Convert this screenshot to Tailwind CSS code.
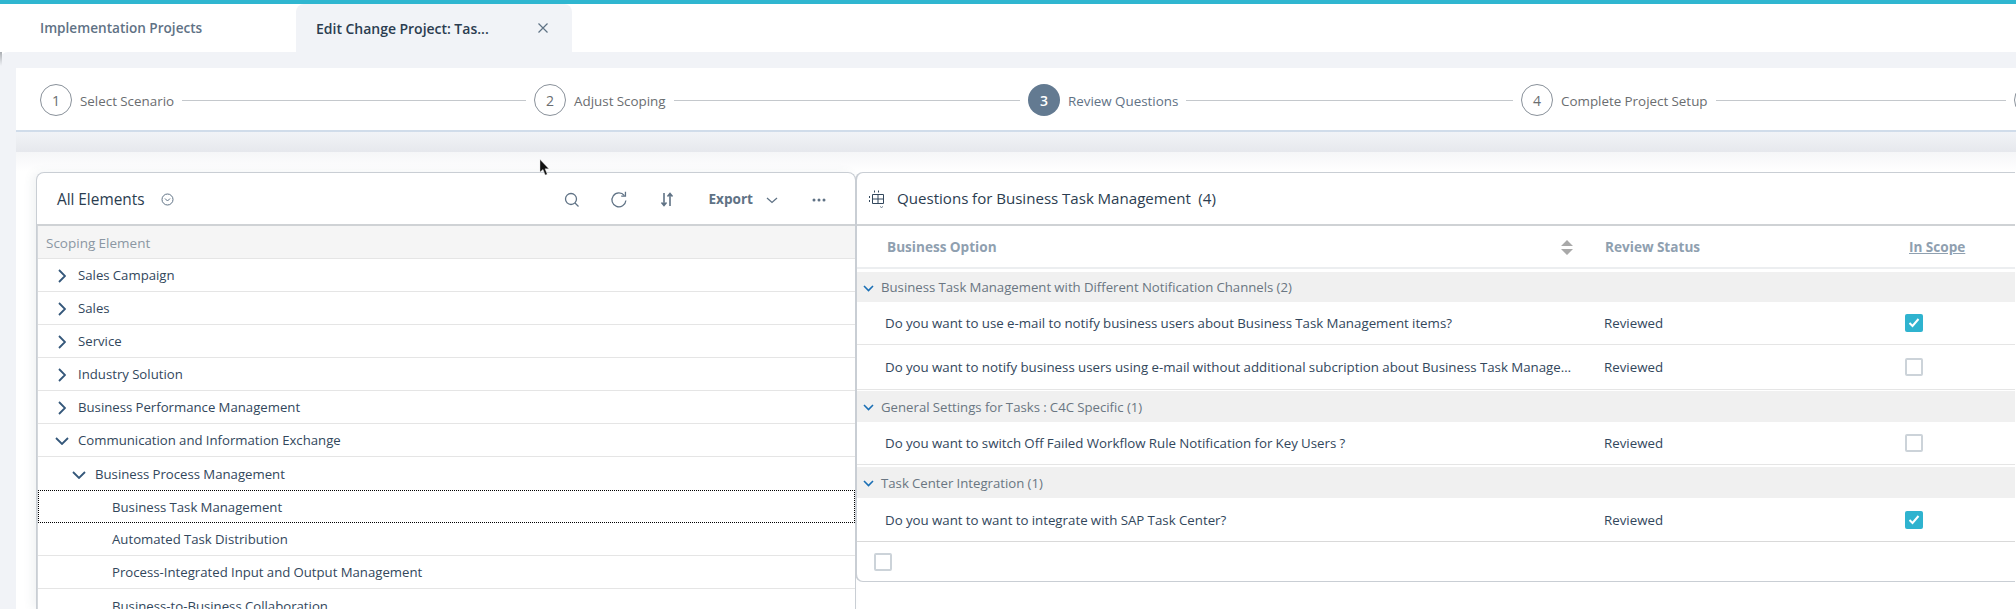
<!DOCTYPE html>
<html lang="en">
  <head>
    <meta charset="UTF-8" />
    <meta name="viewport" content="width=device-width, initial-scale=1.0" />
    <script src="https://cdn.jsdelivr.net/npm/@tailwindcss/browser@4"></script>
  </head>
  <body class="relative h-[609px] w-[2016px] overflow-hidden bg-white font-['Open_Sans',sans-serif] text-[#32475c] [word-spacing:-0.2px]">
    <!-- top accent -->
    <div class="h-[4px] bg-[#2fb6d0]"></div>

    <!-- tabs -->
    <div class="flex h-[48px] bg-white">
      <div class="flex w-[296px] items-center pl-[40px] text-[13.6px] font-semibold text-[#5f7285]">Implementation Projects</div>
      <div class="flex w-[276px] items-center justify-between rounded-t-[8px] bg-[#f1f3f7] pl-[20px] pr-[23px] text-[14px] font-semibold text-[#2b3d50]">
        <span>Edit Change Project: Tas...</span>
        <svg class="h-[12px] w-[12px]" viewBox="0 0 12 12" fill="none" stroke="#5f7285" stroke-width="1.2"><path d="M1.5 1.5l9 9M10.5 1.5l-9 9" /></svg>
      </div>
    </div>

    <!-- page -->
    <div class="h-[557px] rounded-tl-[8px] bg-[#f1f3f7] pl-[16px] pt-[16px]">
      <!-- stepper -->
      <div class="flex h-[64px] overflow-hidden border-b-2 border-[#d0dcea] bg-white pl-[24px] pt-[16px]">
        <div class="flex h-[32px] w-[494px] shrink-0 items-center pr-[8px]">
          <div class="flex h-[32px] w-[32px] shrink-0 items-center justify-center rounded-full border border-[#89919a] text-[14px] text-[#6a6d70]">1</div>
          <span class="ml-[8px] pt-[2px] text-[13.4px] text-[#6a6d70]">Select Scenario</span>
          <div class="ml-[8px] h-px flex-1 bg-[#c4c8cc]"></div>
        </div>
        <div class="flex h-[32px] w-[494px] shrink-0 items-center pr-[8px]">
          <div class="flex h-[32px] w-[32px] shrink-0 items-center justify-center rounded-full border border-[#89919a] text-[14px] text-[#6a6d70]">2</div>
          <span class="ml-[8px] pt-[2px] text-[13.4px] text-[#6a6d70]">Adjust Scoping</span>
          <div class="ml-[8px] h-px flex-1 bg-[#c4c8cc]"></div>
        </div>
        <div class="flex h-[32px] w-[493px] shrink-0 items-center pr-[8px]">
          <div class="flex h-[32px] w-[32px] shrink-0 items-center justify-center rounded-full bg-[#637a91] text-[14px] font-semibold text-white">3</div>
          <span class="ml-[8px] pt-[2px] text-[13.4px] text-[#5f7285]">Review Questions</span>
          <div class="ml-[8px] h-px flex-1 bg-[#c4c8cc]"></div>
        </div>
        <div class="flex h-[32px] w-[493px] shrink-0 items-center pr-[8px]">
          <div class="flex h-[32px] w-[32px] shrink-0 items-center justify-center rounded-full border border-[#89919a] text-[14px] text-[#6a6d70]">4</div>
          <span class="ml-[8px] pt-[2px] text-[13.4px] text-[#6a6d70]">Complete Project Setup</span>
          <div class="ml-[8px] h-px flex-1 bg-[#c4c8cc]"></div>
        </div>
        <div class="h-[32px] w-[32px] shrink-0 rounded-full border border-[#89919a]"></div>
      </div>

      <div class="h-[20px] bg-linear-to-b from-[#f1f3f7] to-[#e6e8ed]"></div>

      <!-- content -->
      <div class="h-[457px] bg-[linear-gradient(#f5f6f8,#ffffff_20px)] pl-[20px] pt-[20px]">
        <div class="flex items-start">
          <!-- left panel -->
          <div class="h-[437px] w-[820px] shrink-0 rounded-t-[8px] border-x border-t border-[#c9ced4] bg-white shadow-[-4px_0_10px_rgba(80,100,120,0.08)]">
            <div class="flex h-[53px] items-center border-b-2 border-[#cfd2d5] pl-[20px] pr-[29px] pt-[2px]">
              <span class="text-[15.4px] text-[#2b3d50]">All Elements</span>
              <svg class="ml-[16px] h-[13px] w-[13px]" viewBox="0 0 13 13" fill="none" stroke="#5f7285"><circle cx="6.5" cy="6.5" r="5.5" /><path d="M4 5.5l2.5 2.5 2.5-2.5" /></svg>
              <svg class="ml-auto h-[16px] w-[16px]" viewBox="0 0 16 16" fill="none" stroke="#5f7285" stroke-width="1.3"><circle cx="7" cy="7" r="5.5" /><path d="M11 11l3.5 3.5" /></svg>
              <svg class="ml-[30px] h-[18px] w-[18px]" viewBox="0 0 17 17" fill="none" stroke="#5f7285" stroke-width="1.2"><path d="M13.6 4.3A6.6 6.6 0 1 0 15 9" /><path d="M14.6 0.8v4h-4" /></svg>
              <svg class="ml-[32px] h-[15px] w-[14px]" viewBox="0 0 14 15" fill="none" stroke="#5f7285" stroke-width="1.6"><path d="M4 1v12M1.5 10.5L4 13.5l2.5-3M10 14V2M7.5 4.5L10 1.5l2.5 3" /></svg>
              <span class="ml-[34px] text-[13.6px] font-bold text-[#5f7285]">Export</span>
              <svg class="ml-[13px] mt-[2px] h-[7px] w-[12px]" viewBox="0 0 12 7" fill="none" stroke="#5f7285" stroke-width="1.3"><path d="M1 1l5 4.5L11 1" /></svg>
              <svg class="ml-[34px] h-[4px] w-[14px]" viewBox="0 0 14 4" fill="#5f7285"><circle cx="2" cy="2" r="1.5" /><circle cx="7" cy="2" r="1.5" /><circle cx="12" cy="2" r="1.5" /></svg>
            </div>

            <div class="border-l border-[#d3d7db] text-[13.2px]">
              <div class="flex h-[33px] items-center border-b border-[#e5e5e5] bg-[#f5f5f5] pl-[8px] pt-[2px] text-[13.5px] text-[#8b97a3]">Scoping Element</div>
              <div class="flex h-[33px] items-center border-b border-[#e5e5e5] pl-[40px] pt-[2px]">
                <svg class="-ml-[20px] mr-[12px] h-[14px] w-[8px]" viewBox="0 0 8 14" fill="none" stroke="#34577a" stroke-width="1.8"><path d="M1 1l6 6-6 6" /></svg>Sales Campaign
              </div>
              <div class="flex h-[33px] items-center border-b border-[#e5e5e5] pl-[40px] pt-[2px]">
                <svg class="-ml-[20px] mr-[12px] h-[14px] w-[8px]" viewBox="0 0 8 14" fill="none" stroke="#34577a" stroke-width="1.8"><path d="M1 1l6 6-6 6" /></svg>Sales
              </div>
              <div class="flex h-[33px] items-center border-b border-[#e5e5e5] pl-[40px] pt-[2px]">
                <svg class="-ml-[20px] mr-[12px] h-[14px] w-[8px]" viewBox="0 0 8 14" fill="none" stroke="#34577a" stroke-width="1.8"><path d="M1 1l6 6-6 6" /></svg>Service
              </div>
              <div class="flex h-[33px] items-center border-b border-[#e5e5e5] pl-[40px] pt-[2px]">
                <svg class="-ml-[20px] mr-[12px] h-[14px] w-[8px]" viewBox="0 0 8 14" fill="none" stroke="#34577a" stroke-width="1.8"><path d="M1 1l6 6-6 6" /></svg>Industry Solution
              </div>
              <div class="flex h-[33px] items-center border-b border-[#e5e5e5] pl-[40px] pt-[2px]">
                <svg class="-ml-[20px] mr-[12px] h-[14px] w-[8px]" viewBox="0 0 8 14" fill="none" stroke="#34577a" stroke-width="1.8"><path d="M1 1l6 6-6 6" /></svg>Business Performance Management
              </div>
              <div class="flex h-[33px] items-center border-b border-[#e5e5e5] pl-[17px] pt-[2px]">
                <svg class="mr-[9px] h-[8px] w-[14px]" viewBox="0 0 14 8" fill="none" stroke="#34577a" stroke-width="1.8"><path d="M1 1l6 6 6-6" /></svg>Communication and Information Exchange
              </div>
              <div class="flex h-[33px] items-center pl-[34px] pt-[2px]">
                <svg class="mr-[9px] h-[8px] w-[14px]" viewBox="0 0 14 8" fill="none" stroke="#34577a" stroke-width="1.8"><path d="M1 1l6 6 6-6" /></svg>Business Process Management
              </div>
              <div class="flex h-[33px] items-center pl-[74px] pt-[2px] outline outline-1 -outline-offset-1 outline-dotted outline-black">Business Task Management</div>
              <div class="flex h-[33px] items-center border-b border-[#e5e5e5] pl-[74px] pt-[2px]">Automated Task Distribution</div>
              <div class="flex h-[33px] items-center border-b border-[#e5e5e5] pl-[74px] pt-[2px]">Process-Integrated Input and Output Management</div>
              <div class="flex h-[33px] items-center pl-[74px] pt-[2px]">Business-to-Business Collaboration</div>
            </div>
          </div>

          <!-- right panel -->
          <div class="ml-[-1px] w-[1160px] shrink-0 rounded-l-[8px] border-y border-l-2 border-[#c9ced4] bg-white text-[13.3px]">
            <div class="flex h-[53px] items-center border-b-2 border-[#cfd2d5] pl-[11px]">
              <svg class="h-[19px] w-[18px]" viewBox="0 0 18 19" fill="none" stroke="#32475c"><path d="M4.5 5.5h11v9h-11zM4.5 10h11M10 5.5v9" /><path d="M1.5 7v2M1.5 11v2M6.5 1.5v2M10.5 1.5v2" /><path d="M12 17.5l1.5 1 1.5-1" stroke-width="0.7" /></svg>
              <span class="ml-[11px] text-[15.1px] text-[#2b3d50]">Questions for Business Task Management&nbsp;&nbsp;(4)</span>
            </div>
            <div class="grid h-[43px] grid-cols-[747px_301px_1fr] items-center border-b-2 border-[#eceef0] pt-[2px] text-[13.6px] font-bold text-[#8fa0b0]">
              <div class="flex items-center justify-between pl-[30px] pr-[31px]">
                <span>Business Option</span>
                <svg class="h-[15px] w-[12px]" viewBox="0 0 12 15" fill="#a9a9a9"><path d="M6 0l6 6H0zM0 9h12l-6 6z" /></svg>
              </div>
              <span class="pl-[1px]">Review Status</span>
              <span class="pl-[4px] underline">In Scope</span>
            </div>

            <div class="mt-[3px] flex h-[30px] items-center bg-[#f0f0f0] pl-[6px] pt-[2px] text-[13.2px] text-[#6a7682]">
              <svg class="mr-[7px] h-[7px] w-[11px]" viewBox="0 0 11 7" fill="none" stroke="#1a6fb5" stroke-width="1.6"><path d="M1 1l4.5 4.5L10 1" /></svg>Business Task Management with Different Notification Channels (2)
            </div>
            <div class="grid h-[43px] grid-cols-[747px_301px_1fr] items-center border-b border-[#e5e5e5]">
              <div class="truncate pl-[28px] pr-[30px] pt-[2px]">Do you want to use e-mail to notify business users about Business Task Management items?</div>
              <span class="pt-[2px]">Reviewed</span>
              <div class="flex h-[18px] w-[18px] items-center justify-center rounded-[2px] bg-[#2fb3cf]">
                <svg class="h-[10px] w-[12px]" viewBox="0 0 12 10" fill="none" stroke="white" stroke-width="2"><path d="M1.5 5l3 3 6-7" /></svg>
              </div>
            </div>
            <div class="grid h-[45px] grid-cols-[747px_301px_1fr] items-center border-b border-[#e5e5e5]">
              <div class="truncate pl-[28px] pr-[30px] pt-[2px]">Do you want to notify business users using e-mail without additional subcription about Business Task Management items?</div>
              <span class="pt-[2px]">Reviewed</span>
              <div class="h-[18px] w-[18px] rounded-[2px] border-2 border-[#ccd3d9]"></div>
            </div>

            <div class="mt-[1px] flex h-[31px] items-center bg-[#f0f0f0] pl-[6px] pt-[2px] text-[13.2px] text-[#6a7682]">
              <svg class="mr-[7px] h-[7px] w-[11px]" viewBox="0 0 11 7" fill="none" stroke="#1a6fb5" stroke-width="1.6"><path d="M1 1l4.5 4.5L10 1" /></svg>General Settings for Tasks : C4C Specific (1)
            </div>
            <div class="grid h-[43px] grid-cols-[747px_301px_1fr] items-center border-b border-[#e5e5e5]">
              <div class="truncate pl-[28px] pr-[30px] pt-[2px]">Do you want to switch Off Failed Workflow Rule Notification for Key Users ?</div>
              <span class="pt-[2px]">Reviewed</span>
              <div class="h-[18px] w-[18px] rounded-[2px] border-2 border-[#ccd3d9]"></div>
            </div>

            <div class="mt-[2px] flex h-[31px] items-center bg-[#f0f0f0] pl-[6px] pt-[2px] text-[13.2px] text-[#6a7682]">
              <svg class="mr-[7px] h-[7px] w-[11px]" viewBox="0 0 11 7" fill="none" stroke="#1a6fb5" stroke-width="1.6"><path d="M1 1l4.5 4.5L10 1" /></svg>Task Center Integration (1)
            </div>
            <div class="grid h-[44px] grid-cols-[747px_301px_1fr] items-center border-b border-[#d9d9d9]">
              <div class="truncate pl-[28px] pr-[30px] pt-[2px]">Do you want to want to integrate with SAP Task Center?</div>
              <span class="pt-[2px]">Reviewed</span>
              <div class="flex h-[18px] w-[18px] items-center justify-center rounded-[2px] bg-[#2fb3cf]">
                <svg class="h-[10px] w-[12px]" viewBox="0 0 12 10" fill="none" stroke="white" stroke-width="2"><path d="M1.5 5l3 3 6-7" /></svg>
              </div>
            </div>
            <div class="flex h-[39px] items-center pl-[17px]">
              <div class="h-[18px] w-[18px] rounded-[2px] border-2 border-[#ccd3d9]"></div>
            </div>
          </div>
        </div>
      </div>
    </div>

    <!-- shaded corner of the page -->
    <div class="absolute left-0 top-[52px] h-[14px] w-[2px] bg-linear-to-b from-[#a9adb2] to-transparent"></div>

    <!-- mouse cursor -->
    <svg class="absolute left-[539px] top-[159px] h-[17px] w-[11px]" viewBox="0 0 11 17"><path d="M1 0.5v12.5l3-2.6 2.2 5.6 2-0.8-2.2-5.4h3.8z" fill="#111" stroke="#ddd" stroke-width="0.4" /></svg>
  </body>
</html>
